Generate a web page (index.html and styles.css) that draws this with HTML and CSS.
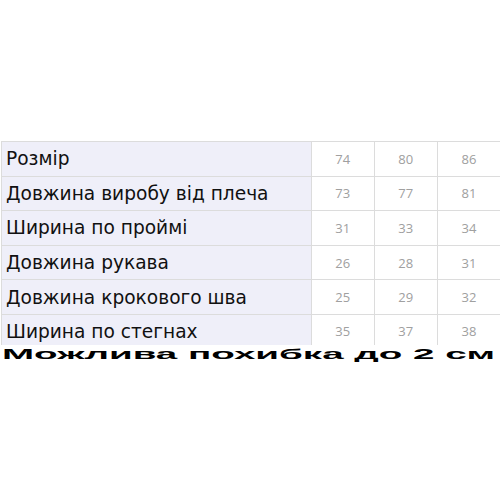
FILE: index.html
```html
<!DOCTYPE html>
<html lang="uk">
<head>
<meta charset="utf-8">
<link rel="stylesheet" href="styles.css">
</head>
<body>
<div class="page">
  <table class="sizes">
    <tr><td class="label">Розмір</td><td class="num">74</td><td class="num">80</td><td class="num">86</td></tr>
    <tr><td class="label">Довжина виробу від плеча</td><td class="num">73</td><td class="num">77</td><td class="num">81</td></tr>
    <tr><td class="label">Ширина по проймі</td><td class="num">31</td><td class="num">33</td><td class="num">34</td></tr>
    <tr><td class="label">Довжина рукава</td><td class="num">26</td><td class="num">28</td><td class="num">31</td></tr>
    <tr><td class="label">Довжина крокового шва</td><td class="num">25</td><td class="num">29</td><td class="num">32</td></tr>
    <tr class="last"><td class="label">Ширина по стегнах</td><td class="num">35</td><td class="num">37</td><td class="num">38</td></tr>
  </table>
  <div class="note"><span class="note-text">Можлива похибка до 2 см</span></div>
</div>
</body>
</html>
```
FILE: styles.css
```css
html, body {
  margin: 0;
  padding: 0;
  background: #ffffff;
}
.page {
  padding-top: 141px;
  padding-left: 1px;
  width: 499px;
  overflow: hidden;
}
.sizes {
  border-collapse: collapse;
  width: 500px;
  table-layout: fixed;
}
.sizes td {
  border: 1px solid #dcdcdc;
  height: 34.6px;
  padding: 0;
  box-sizing: border-box;
}
.sizes .last td {
  height: 33px;
  border-bottom: none;
}
.label {
  width: 309px;
  background: #efeff9;
  font-family: "DejaVu Sans", Verdana, sans-serif;
  font-size: 18.6px;
  color: #111111;
  padding-left: 4px !important;
}
.num {
  width: 63px;
  text-align: center;
  font-family: "Open Sans", sans-serif;
  font-size: 13px;
  color: #a0a0a0;
}
.note {
  position: relative;
  height: 20px;
  margin-top: -2px;
  background: #ffffff;
  white-space: nowrap;
}
.note-text {
  display: inline-block;
  font-family: "Liberation Sans", Arial, sans-serif;
  font-weight: bold;
  font-size: 15px;
  line-height: 18px;
  color: #000000;
  transform: scaleX(2.57);
  transform-origin: left center;
  margin-left: 1px;
}
```
